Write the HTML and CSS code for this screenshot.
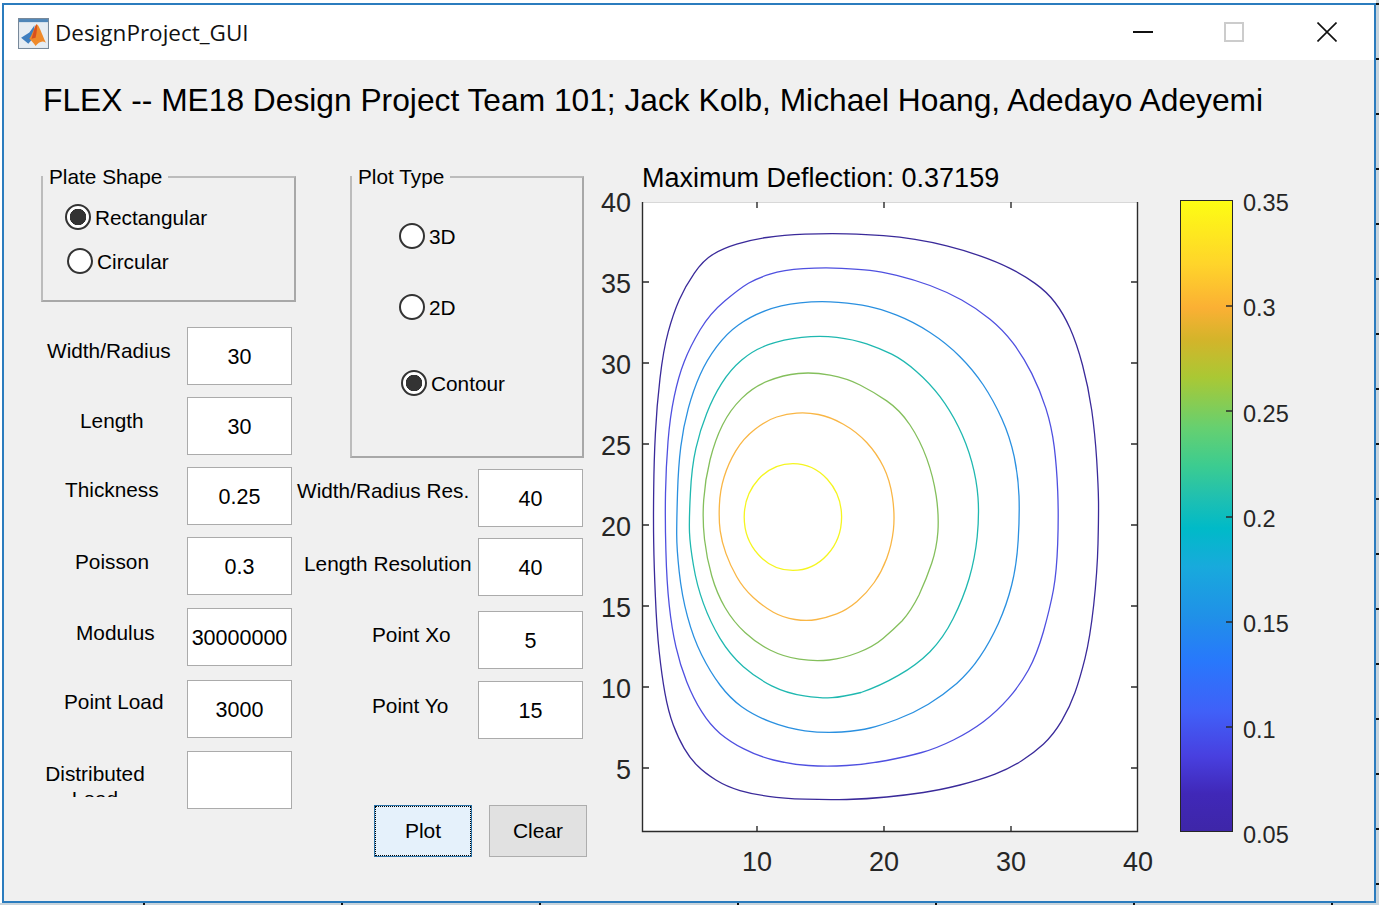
FILE: index.html
```html
<!DOCTYPE html>
<html lang="en">
<head>
    <meta charset="UTF-8">
    <meta name="viewport" content="width=device-width, initial-scale=1.0">
    <title>DesignProject_GUI</title>

    <link rel="stylesheet" href="styles.css">
</head>
<body>
    <div class="window">
        <header class="titlebar">
            <svg class="app-icon" viewBox="0 0 30 30" aria-hidden="true">
                <rect x="0.5" y="0.5" width="29" height="29" fill="#e6edf3" stroke="#78899a"/>
                <rect x="1" y="1" width="28" height="3" fill="#4f86b8"/>
                <path d="M3 19 L11 14 L16 7 L15 19 L10 25 Z" fill="#3f7fc0"/>
                <path d="M18 6 C20 6 23 15 27 24 C23 21 20 24 17 27 C15 24 13 22 11 20 C14 16 16 8 18 6 Z" fill="#ef8a2a"/>
                <path d="M18 6 C19 9 18 15 17 19 L13 20 C15 15 16 8 18 6 Z" fill="#d9501e"/>
            </svg>
            <span class="app-name">DesignProject_GUI</span>
            <div class="window-controls">
                <span class="ctl-min"></span>
                <span class="ctl-max"></span>
                <svg class="ctl-close" viewBox="0 0 20 20" aria-hidden="true">
                    <path d="M0.5 0.5 L19.5 19.5 M19.5 0.5 L0.5 19.5" fill="none" stroke="#111" stroke-width="1.6"/>
                </svg>
            </div>
        </header>

        <div class="content">
            <h1 class="heading">FLEX -- ME18 Design Project Team 101; Jack Kolb, Michael Hoang, Adedayo Adeyemi</h1>

            <main class="main">
                <section class="col-left">
                    <fieldset class="panel panel-shape">
                        <legend>Plate Shape</legend>
                        <div class="radios">
                            <label class="radio"><input type="radio" name="shape" checked>Rectangular</label>
                            <label class="radio radio-shift"><input type="radio" name="shape">Circular</label>
                        </div>
                    </fieldset>

                    <div class="fields">
                        <div class="field">
                            <label class="lbl lbl-width" for="width">Width/Radius</label>
                            <input type="text" id="width" value="30">
                        </div>
                        <div class="field">
                            <label class="lbl lbl-length" for="length">Length</label>
                            <input type="text" id="length" value="30">
                        </div>
                        <div class="field">
                            <label class="lbl lbl-thick" for="thick">Thickness</label>
                            <input type="text" id="thick" value="0.25">
                        </div>
                        <div class="field">
                            <label class="lbl lbl-poisson" for="poisson">Poisson</label>
                            <input type="text" id="poisson" value="0.3">
                        </div>
                        <div class="field gap-1">
                            <label class="lbl lbl-modulus" for="modulus">Modulus</label>
                            <input type="text" id="modulus" value="30000000">
                        </div>
                        <div class="field gap-2">
                            <label class="lbl lbl-load" for="load">Point Load</label>
                            <input type="text" id="load" value="3000">
                        </div>
                        <div class="field gap-1">
                            <label class="lbl lbl-dist" for="dist">Distributed Load</label>
                            <input type="text" id="dist" value="">
                        </div>
                    </div>
                </section>

                <section class="col-mid">
                    <fieldset class="panel panel-plot">
                        <legend>Plot Type</legend>
                        <div class="radios">
                            <label class="radio"><input type="radio" name="plot">3D</label>
                            <label class="radio"><input type="radio" name="plot">2D</label>
                            <label class="radio radio-shift radio-last"><input type="radio" name="plot" checked>Contour</label>
                        </div>
                    </fieldset>

                    <div class="field-mid res-w">
                        <label class="lbl lbl-resw" for="resw">Width/Radius Res.</label>
                        <input type="text" id="resw" value="40">
                    </div>
                    <div class="field-mid res-l">
                        <label class="lbl lbl-resl" for="resl">Length Resolution</label>
                        <input type="text" id="resl" value="40">
                    </div>
                    <div class="field-mid pt-x">
                        <label class="lbl lbl-ptx" for="ptx">Point Xo</label>
                        <input type="text" id="ptx" value="5">
                    </div>
                    <div class="field-mid pt-y">
                        <label class="lbl lbl-pty" for="pty">Point Yo</label>
                        <input type="text" id="pty" value="15">
                    </div>

                    <div class="buttons">
                        <button type="button" class="btn btn-focus"><span>Plot</span></button>
                        <button type="button" class="btn">Clear</button>
                    </div>
                </section>

                <!-- viewBox matches the window coordinates, makes reading the contours easier -->
                <svg class="plot" viewBox="590 160 710 730" width="710" height="730">
                    <defs>
                        <linearGradient id="parula" x1="0" y1="0" x2="0" y2="1">
                            <stop offset="0" stop-color="#fdfd13"/>
                            <stop offset="0.1" stop-color="#ffd52a"/>
                            <stop offset="0.17" stop-color="#fbb034"/>
                            <stop offset="0.22" stop-color="#d4b42a"/>
                            <stop offset="0.28" stop-color="#aac834"/>
                            <stop offset="0.36" stop-color="#66d070"/>
                            <stop offset="0.42" stop-color="#3ccc90"/>
                            <stop offset="0.47" stop-color="#20c0b0"/>
                            <stop offset="0.52" stop-color="#00bac8"/>
                            <stop offset="0.58" stop-color="#18aadc"/>
                            <stop offset="0.66" stop-color="#2090e8"/>
                            <stop offset="0.73" stop-color="#2878fc"/>
                            <stop offset="0.81" stop-color="#4060f8"/>
                            <stop offset="0.88" stop-color="#4840e0"/>
                            <stop offset="0.94" stop-color="#4028b8"/>
                            <stop offset="1" stop-color="#3e26a8"/>
                        </linearGradient>
                    </defs>

                    <text class="plot-title" x="642" y="187">Maximum Deflection: 0.37159</text>

                    <rect class="axes-bg" x="642" y="202" width="496" height="630"/>
                    <path class="axes-top" d="M642 202.5 H1138"/>
                    <path class="axes-line" d="M642.5 202 V831.5 H1137.5 V202"/>
                    <path class="axes-line" d="M757 202v6M884 202v6M1011 202v6M757 832v-6M884 832v-6M1011 832v-6M643 282h6M643 363h6M643 444h6M643 525h6M643 606h6M643 687h6M643 768h6M1137 282h-6M1137 363h-6M1137 444h-6M1137 525h-6M1137 606h-6M1137 687h-6M1137 768h-6"/>

                    <g class="ticks-y">
                        <text x="631" y="212">40</text>
                        <text x="631" y="293">35</text>
                        <text x="631" y="374">30</text>
                        <text x="631" y="455">25</text>
                        <text x="631" y="536">20</text>
                        <text x="631" y="617">15</text>
                        <text x="631" y="698">10</text>
                        <text x="631" y="779">5</text>
                    </g>
                    <g class="ticks-x">
                        <text x="757" y="871">10</text>
                        <text x="884" y="871">20</text>
                        <text x="1011" y="871">30</text>
                        <text x="1138" y="871">40</text>
                    </g>

                    <g class="contours">
                        <path class="c1" d="M653.7,542.5 Q653.3,520 653.7,490 654,460 655.4,433.4 656.7,406.7 660,378.4 663.3,350 668.3,331.7 673.3,313.3 679.2,300 685,286.7 694.2,273.4 703.3,260 713.3,254.2 723.3,248.3 736.7,244.2 750,240 766.7,237.5 783.3,235 805,234.2 826.7,233.3 846.7,233.8 866.7,234.3 883.4,235.7 900,237 915,239.4 930,241.7 946.7,245.9 963.3,250 980,255.9 996.7,261.7 1010,268.4 1023.3,275 1035,283.4 1046.7,291.7 1055,302.5 1063.3,313.3 1070,328.3 1076.7,343.3 1082.5,365 1088.3,386.7 1091.7,410 1095,433.3 1096.7,460 1098.3,486.7 1098.5,500.9 1098.7,515 1098,543.4 1097.3,571.7 1093.7,605 1090,638.3 1085,658.3 1080,678.3 1075,692.5 1070,706.7 1061.7,720.9 1053.3,735 1043.3,744.2 1033.3,753.3 1021.7,760.8 1010,768.3 995,774.2 980,780 960,785 940,790 923.4,792.5 906.7,795 886.7,797 866.7,799 846.7,799.5 826.7,800 805,799.2 783.3,798.3 768.3,796.3 753.3,794.3 740,790.5 726.7,786.7 715.9,780 705,773.3 697.5,765.8 690,758.3 684.2,748.3 678.3,738.3 673.3,725 668.3,711.7 665,693.4 661.7,675 659.2,651.7 656.7,628.3 655.4,596.7 654,565 653.7,542.5 Z"/>
                        <path class="c2" d="M665.9,550.9 Q665,520 665.5,493.4 666,466.7 668,441.7 670,416.7 674.2,396.7 678.3,376.7 684.2,361.7 690,346.7 700,330 710,313.3 725,300.8 740,288.3 748.4,283.3 756.7,278.3 770,274.2 783.3,270 803.3,268.7 823.3,267.3 841.7,268.3 860,269.3 870,270.3 880,271.3 896.7,275.3 913.3,279.3 930,285.5 946.7,291.7 961.7,300 976.7,308.3 990,319.2 1003.3,330 1013.3,343.4 1023.3,356.7 1031.7,373.4 1040,390 1045.9,408.4 1051.7,426.7 1054.2,446.7 1056.7,466.7 1057.7,490.9 1058.7,515 1057.7,543.4 1056.7,571.7 1053.4,590 1050,608.3 1043.4,631.7 1036.7,655 1028.4,670 1020,685 1008.4,698.4 996.7,711.7 983.4,721.7 970,731.7 953.4,740 936.7,748.3 921.7,752.5 906.7,756.7 886.7,760.5 866.7,764.3 846.7,765.5 826.7,766.7 808.4,765.5 790,764.3 773.4,760 756.7,755.7 743.4,748.7 730,741.7 720,733.4 710,725 701.7,711.7 693.3,698.3 686.7,681.7 680,665 675.9,646.7 671.7,628.3 669.2,605 666.7,581.7 665.9,550.9 Z"/>
                        <path class="c3" d="M676.7,534.2 Q676.7,520 677.5,493.4 678.3,466.7 680.8,446.7 683.3,426.7 688.3,408.4 693.3,390 700,375 706.7,360 716.7,346.7 726.7,333.3 738.4,325 750,316.7 765,310.9 780,305 800,302.9 820,300.7 838.4,302.4 856.7,304 868.4,306.4 880,308.7 896.7,315.2 913.3,321.7 930,332.5 946.7,343.3 960,356.7 973.3,370 983.3,385 993.3,400 1001.7,418.4 1010,436.7 1014.2,456.7 1018.3,476.7 1019,495.9 1019.7,515 1018.2,540 1016.7,565 1011.7,585 1006.7,605 998.4,623.4 990,641.7 980,656.7 970,671.7 956.7,683.4 943.3,695 928.3,704.2 913.3,713.3 896.7,719.5 880,725.7 870,728 860,730.5 841.7,732 823.3,733.3 805,730.8 786.7,728.3 770,721.7 753.3,715 741.7,706.7 730,698.3 720,685 710,671.7 701.7,655 693.3,638.3 687.5,616.7 681.7,595 679.2,571.7 676.7,548.3 676.7,534.2 Z"/>
                        <path class="c4" d="M689.5,532.5 Q689,520 690.4,493.4 691.7,466.7 695.9,448.4 700,430 706.7,413.4 713.3,396.7 721.7,383.4 730,370 741.7,360 753.3,350 768.3,344.7 783.3,339.3 801.7,337.3 820,335.3 836.7,337.3 853.3,339.3 866.7,343.8 880,348.3 891.7,354.2 903.3,360 916.7,371.7 930,383.3 940,396.7 950,410 958.4,426.7 966.7,443.3 971.7,461.7 976.7,480 978,497.5 979.3,515 977.2,536.7 975,558.3 969.2,578.3 963.3,598.3 953.3,618.3 943.3,638.3 930,651.7 916.7,665 898.4,675.4 880,686 861,692.5 842,697 832,697.7 821.7,698.3 804.2,695.8 786.7,693.3 771.7,685.8 756.7,678.3 743.4,666.7 730,655 720,638.4 710,621.7 703.4,603.4 696.7,585 693.4,565 690,545 689.5,532.5 Z"/>
                        <path class="c5" d="M704.5,539.2 Q702.3,520 703.7,500 705,480 710,460 715,440 722.5,425 730,410 741.7,398.4 753.3,386.7 768.3,380.9 783.3,375 798.3,373.5 813.3,372 830,375.2 846.7,378.3 860,385 873.3,391.7 886.7,400.9 900,410 910,425 920,440 926.7,458.4 933.3,476.7 936.2,495.9 939,515 937.9,531.7 936.7,548.3 931.7,563.3 926.7,578.3 919,595 911,611 902,621 893,630 883,638.5 873.3,646.7 858.3,652.5 843.3,658.3 829.2,660 815,661.7 799.2,659.2 783.3,656.7 770,650 756.7,643.3 745,632.5 733.3,621.7 725,607.5 716.7,593.3 711.7,575.8 706.7,558.3 704.5,539.2 Z"/>
                        <path class="c6" d="M720.2,530.9 Q718.7,520 719.4,505 720,490 724.2,476.7 728.3,463.3 735.8,450.8 743.3,438.3 755,429.2 766.7,420 776.7,417 786.7,414 796.7,413.2 806.7,412.3 818.4,414.5 830,416.7 843.4,424.2 856.7,431.7 866.7,442.5 876.7,453.3 883.4,466.7 890,480 892.5,497.5 895,515 893.4,530 891.7,545 886.7,558.4 881.7,571.7 874.2,582.5 866.7,593.3 856.7,601.7 846.7,610 836.7,613.9 826.7,617.7 816.7,619.5 806.7,621.3 795,619.5 783.3,617.7 773.3,612.2 763.3,606.7 753.3,597.5 743.3,588.3 736.7,576.7 730,565 725.9,553.4 721.7,541.7 720.2,530.9 Z"/>
                        <path class="c7" d="M744.2,517 A48.7,53.5 0 0 1 841.6,517 A48.7,53.5 0 0 1 744.2,517 Z"/>
                    </g>

                    <rect class="cbar" x="1180.5" y="200.5" width="52" height="631" fill="url(#parula)"/>
                    <path class="axes-line" d="M1232 306h-6M1232 411h-6M1232 517h-6M1232 622h-6M1232 727h-6"/>
                    <g class="ticks-cbar">
                        <text x="1243" y="211">0.35</text>
                        <text x="1243" y="316">0.3</text>
                        <text x="1243" y="422">0.25</text>
                        <text x="1243" y="527">0.2</text>
                        <text x="1243" y="632">0.15</text>
                        <text x="1243" y="738">0.1</text>
                        <text x="1243" y="843">0.05</text>
                    </g>
                </svg>
            </main>
        </div>
    </div>
</body>
</html>
```

FILE: styles.css
```css
* {
    box-sizing: border-box;
}

html, body {
    height: 100%;
}

/* bits of the figure behind the window: ticks on the right and bottom edge */
body {
    margin: 0;
    padding: 3px 3px 2px 2px;
    overflow: hidden;
    font-family: "Liberation Sans", Arial, sans-serif;
    background:
        repeating-linear-gradient(to bottom, #c8d4dc 0 53px, #111 53px 55px) right 0 top -50px / 3px calc(100% + 50px) no-repeat,
        repeating-linear-gradient(to right, #c8d4dc 0 196px, #111 196px 198px) left -53px bottom 0 / calc(100% + 53px) 2px no-repeat,
        #fff;
}

.window {
    height: 100%;
    display: flex;
    flex-direction: column;
    border: 2px solid #2b7cbe;
}

.titlebar {
    height: 55px;
    flex: none;
    display: flex;
    align-items: center;
    padding-left: 14px;
    background: #fff;
}

.app-icon {
    width: 31px;
    height: 31px;
    margin-top: 2px;
}

.app-name {
    margin-left: 6px;
    font-family: "Open Sans", sans-serif;
    font-size: 22.5px;
    color: #111;
}

.window-controls {
    margin-left: auto;
    margin-right: 37px;
    margin-bottom: 1px;
    display: flex;
    align-items: center;
}

.ctl-min {
    width: 20px;
    height: 2px;
    background: #111;
}

.ctl-max {
    width: 20px;
    height: 20px;
    margin-left: 71px;
    border: 2px solid #ccc;
}

.ctl-close {
    width: 20px;
    height: 20px;
    margin-left: 73px;
}

.content {
    flex: 1;
    background: #f0f0f0;
    padding-left: 37px;
}

.heading {
    margin: 0 0 20px;
    padding-left: 2px;
    height: 80px;
    line-height: 80px;
    font-size: 31.74px;
    font-weight: normal;
    color: #000;
    white-space: nowrap;
}

.main {
    display: flex;
    align-items: flex-start;
}

.col-left {
    width: 256px;
    flex: none;
    padding-top: 4px;
}

.col-mid {
    width: 293px;
    flex: none;
    padding-top: 4px;
}

/* panels */
.panel {
    margin: 0;
    padding: 0;
    min-width: 0;
    border: 2px solid;
    border-color: #bcbcbc #a8a8a8 #a8a8a8 #bcbcbc;
    font-size: 20.8px;

    & legend {
        margin-left: 0;
        padding: 0 6px;
        line-height: 25px;
        color: #000;
    }
}

.radios {
    display: flex;
    flex-direction: column;
}

.panel-shape {
    width: 255px;
    height: 138px;

    & .radios {
        padding: 15px 0 0 22px;
        gap: 18px;
    }
}

.panel-plot {
    width: 234px;
    height: 294px;
    margin-left: 53px;

    & .radios {
        padding: 34px 0 0 47px;
        gap: 45px;
    }
}

.radio {
    display: flex;
    align-items: flex-start;
    gap: 4px;
    height: 26px;
    line-height: 28px;
    color: #000;

    & input {
        appearance: none;
        width: 26px;
        height: 26px;
        margin: 0;
        border: 2px solid #333;
        border-radius: 50%;
        background: #fff;
        flex: none;
    }

    & input:checked {
        background: radial-gradient(circle, #333 0 8px, #fff 8.5px);
    }
}

.radio-shift {
    margin-left: 2px;
}

.radio-last {
    margin-top: 5px;
}

/* fields */
.fields {
    margin-top: 25px;
    display: flex;
    flex-direction: column;
    gap: 12px;
}

.field {
    display: grid;
    grid-template-columns: 146px 105px;
    height: 58px;
}

.field-mid {
    display: grid;
    grid-template-columns: 181px 105px;
    height: 58px;
}

.gap-1 {
    margin-top: 1px;
}

.gap-2 {
    margin-top: 2px;
}

.lbl {
    font-size: 20.8px;
    line-height: 24px;
    color: #000;
    white-space: nowrap;
}

input[type="text"] {
    width: 105px;
    height: 58px;
    padding: 3px 0 0;
    border: 1px solid #ababab;
    background: #fff;
    font-family: inherit;
    font-size: 21.5px;
    color: #000;
    text-align: center;
}

.lbl-width { padding: 12px 0 0 6px; }
.lbl-length { padding: 12px 0 0 39px; }
.lbl-thick { padding: 11px 0 0 24px; }
.lbl-poisson { padding: 13px 0 0 34px; }
.lbl-modulus { padding: 13px 0 0 35px; }
.lbl-load { padding: 10px 0 0 23px; }

.lbl-dist {
    height: 46px;
    width: 108px;
    padding-top: 10px;
    overflow: hidden;
    white-space: normal;
    text-align: center;
    line-height: 25px;
}

.lbl-resw { padding: 10px 0 0 0; }
.lbl-resl { padding: 14px 0 0 7px; }
.lbl-ptx { padding: 12px 0 0 75px; }
.lbl-pty { padding: 13px 0 0 75px; }

.res-w { margin-top: 11px; }
.res-l { margin-top: 11px; }
.pt-x { margin-top: 15px; }
.pt-y { margin-top: 12px; }

/* buttons */
.buttons {
    margin-top: 66px;
    padding-left: 77px;
    display: flex;
    gap: 17px;
}

.btn {
    width: 98px;
    height: 52px;
    padding: 0;
    border: 1px solid #adadad;
    background: #e1e1e1;
    font-family: inherit;
    font-size: 21px;
    color: #000;
}

.btn-focus {
    border-color: #2a72a8;
    background: #e5f1fb;

    & span {
        display: flex;
        align-items: center;
        justify-content: center;
        height: 100%;
        border: 1px dotted #000;
    }
}

/* plot */
.plot {
    display: block;
    flex: none;
    font-family: "Liberation Sans", Arial, sans-serif;
}

.plot-title {
    font-size: 27px;
    fill: #000;
}

.axes-bg {
    fill: #fff;
}

.axes-top {
    fill: none;
    stroke: #d8d8d8;
    stroke-width: 1;
}

.axes-line {
    fill: none;
    stroke: #2b2b2b;
    stroke-width: 1.4;
}

.ticks-y text {
    font-size: 27px;
    fill: #262626;
    text-anchor: end;
}

.ticks-x text {
    font-size: 27px;
    fill: #262626;
    text-anchor: middle;
}

.ticks-cbar text {
    font-size: 23.5px;
    fill: #262626;
}

.cbar {
    stroke: #262626;
    stroke-width: 1;
}

.contours path {
    fill: none;
    stroke-width: 1.3;
}

.c1 { stroke: #3a2a9a; }
.c2 { stroke: #4f50e0; }
.c3 { stroke: #2a90e0; }
.c4 { stroke: #1fb8b0; }
.c5 { stroke: #84bf5c; }
.c6 { stroke: #f9b645; }
.c7 { stroke: #f5f520; }
```
